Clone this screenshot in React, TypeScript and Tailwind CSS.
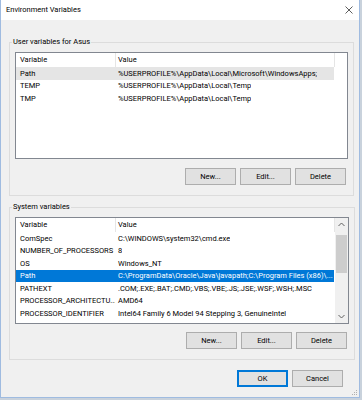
import type { ReactNode } from 'react';

const userVars: [string, string][] = [
  ['Path', '%USERPROFILE%\\AppData\\Local\\Microsoft\\WindowsApps;'],
  ['TEMP', '%USERPROFILE%\\AppData\\Local\\Temp'],
  ['TMP', '%USERPROFILE%\\AppData\\Local\\Temp'],
];

const systemVars: [string, string][] = [
  ['ComSpec', 'C:\\WINDOWS\\system32\\cmd.exe'],
  ['NUMBER_OF_PROCESSORS', '8'],
  ['OS', 'Windows_NT'],
  ['Path', 'C:\\ProgramData\\Oracle\\Java\\javapath;C:\\Program Files (x86)\\...'],
  ['PATHEXT', '.COM;.EXE;.BAT;.CMD;.VBS;.VBE;.JS;.JSE;.WSF;.WSH;.MSC'],
  ['PROCESSOR_ARCHITECTU...', 'AMD64'],
  ['PROCESSOR_IDENTIFIER', 'Intel64 Family 6 Model 94 Stepping 3, GenuineIntel'],
  ['PROCESSOR_LEVEL', '6'],
];

const Button = ({ children, focused }: { children: ReactNode; focused?: boolean }) => (
  <button
    className={
      focused
        ? 'flex h-[17px] w-[51px] items-center justify-center border border-[#0078d7] bg-[#e1e1e1] shadow-[inset_0_0_0_1px_#0078d7]'
        : 'flex h-[17px] w-[51px] items-center justify-center border border-[#adadad] bg-[#e1e1e1]'
    }
  >
    {children}
  </button>
);

const Chevron = ({ up }: { up?: boolean }) => (
  <svg width="7" height="5" viewBox="0 0 7 5" className="text-[#606060]">
    <path d={up ? 'M0.5 4 L3.5 1 L6.5 4' : 'M0.5 1 L3.5 4 L6.5 1'} fill="none" stroke="currentColor" strokeWidth="1" />
  </svg>
);

const Scrollbar = () => (
  <div className="flex w-[13px] shrink-0 flex-col bg-[#f0f0f0]">
    <div className="flex h-[13px] items-center justify-center">
      <Chevron up />
    </div>
    <div className="flex-1 px-[1px] pt-[4px]">
      <div className="h-[38px] bg-[#cdcdcd]" />
    </div>
    <div className="flex h-[13px] items-center justify-center">
      <Chevron />
    </div>
  </div>
);

const VarList = ({
  rows,
  selected,
  focused,
  scroll,
}: {
  rows: [string, string][];
  selected: number;
  focused?: boolean;
  scroll?: boolean;
}) => (
  <div className="flex h-[107px] overflow-hidden border border-[#828790] bg-white">
    <div className="min-w-0 flex-1">
      <div className="flex h-[14px]">
        <div className="flex w-[100px] items-center border-r border-[#e5e5e5] pl-[4px]">Variable</div>
        <div className="flex w-[219px] items-center border-r border-[#e5e5e5] pl-[2px]">Value</div>
      </div>
      {rows.map(([name, value], i) => (
        <div
          key={name}
          className={
            i === selected
              ? focused
                ? 'flex h-[12.5px] w-[318px] items-center whitespace-nowrap bg-[#0078d7] text-white'
                : 'flex h-[12.5px] w-[318px] items-center whitespace-nowrap bg-[#e5e5e5]'
              : 'flex h-[12.5px] w-[318px] items-center whitespace-nowrap'
          }
        >
          <span className="w-[99px] shrink-0 overflow-hidden pl-[4px]">{name}</span>
          <span className="overflow-hidden pl-[3px]">{value}</span>
        </div>
      ))}
    </div>
    {scroll && <Scrollbar />}
  </div>
);

const Group = ({ title, children }: { title: string; children: ReactNode }) => (
  <fieldset className="border border-[#dcdcdc] px-[5px] pb-[10px]">
    <legend className="-ml-[3px] px-[1px] leading-[12px]">{title}</legend>
    <div className="pt-[4px]">{children}</div>
  </fieldset>
);

export default function App() {
  return (
    <div className="flex h-[400px] w-[362px] bg-[#c9d2dc] font-['Roboto','Liberation_Sans',sans-serif] text-[7.5px] text-black">
      <div className="flex h-[398px] w-[360px] flex-col border-x border-b border-[#9fbbe0]">
        {/* title bar */}
        <div className="flex h-[20px] items-center justify-between bg-white pl-[5px] pr-[6px]">
          <span className="text-[7.5px] text-black">Environment Variables</span>
          <svg width="8" height="8" viewBox="0 0 8 8" className="text-[#333]">
            <path d="M0.5 0.5 L7.5 7.5 M7.5 0.5 L0.5 7.5" stroke="currentColor" strokeWidth="0.8" />
          </svg>
        </div>

        <div className="relative flex flex-1 flex-col bg-[#f0f0f0] pl-[8px] pr-[5px] pt-[16px]">
          <Group title="User variables for Asus">
            <VarList rows={userVars} selected={0} />
            <div className="mt-[9px] flex justify-end gap-[4px] pr-[2px]">
              <Button>New...</Button>
              <Button>Edit...</Button>
              <Button>Delete</Button>
            </div>
          </Group>

          <div className="mt-[5px]">
            <Group title="System variables">
              <VarList rows={systemVars} selected={3} focused scroll />
              <div className="mt-[8px] flex justify-end gap-[4px] pr-[2px]">
                <Button>New...</Button>
                <Button>Edit...</Button>
                <Button>Delete</Button>
              </div>
            </Group>
          </div>

          <div className="mt-[10px] flex justify-end gap-[4px] pr-[11px]">
            <Button focused>OK</Button>
            <Button>Cancel</Button>
          </div>

          {/* size grip */}
          <svg width="6" height="6" viewBox="0 0 6 6" className="absolute bottom-[1px] right-[1px] text-[#b0b0b0]">
            <rect x="4" y="0" width="1" height="1" fill="currentColor" />
            <rect x="2" y="2" width="1" height="1" fill="currentColor" />
            <rect x="4" y="2" width="1" height="1" fill="currentColor" />
            <rect x="0" y="4" width="1" height="1" fill="currentColor" />
            <rect x="2" y="4" width="1" height="1" fill="currentColor" />
            <rect x="4" y="4" width="1" height="1" fill="currentColor" />
          </svg>
        </div>
      </div>
    </div>
  );
}
